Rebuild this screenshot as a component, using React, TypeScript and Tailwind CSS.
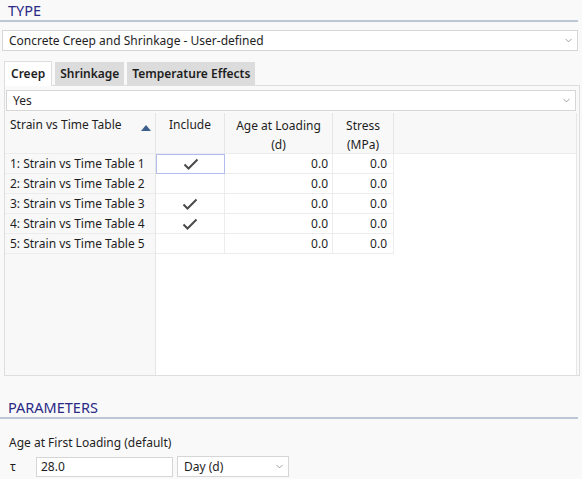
import { ChevronDown } from "lucide-react"

const rows = [
  { name: "1: Strain vs Time Table 1", include: true, age: "0.0", stress: "0.0" },
  { name: "2: Strain vs Time Table 2", include: false, age: "0.0", stress: "0.0" },
  { name: "3: Strain vs Time Table 3", include: true, age: "0.0", stress: "0.0" },
  { name: "4: Strain vs Time Table 4", include: true, age: "0.0", stress: "0.0" },
  { name: "5: Strain vs Time Table 5", include: false, age: "0.0", stress: "0.0" },
]

function Check() {
  return (
    <svg width="16" height="12" viewBox="0 0 16 12" fill="none">
      <path d="M1.5 6.5L5.5 10.5L14.5 1.5" stroke="#4a4a4a" strokeWidth="2" />
    </svg>
  )
}

function Select({ value, className = "" }: { value: string; className?: string }) {
  return (
    <div
      className={`flex h-[21px] items-center justify-between border border-[#d6d6d6] bg-white pl-[6px] pr-[3px] ${className}`}
    >
      <span>{value}</span>
      <ChevronDown size={11} strokeWidth={1.5} className="text-[#777]" />
    </div>
  )
}

function SectionTitle({ children }: { children: string }) {
  return (
    <div className="mr-[4px] border-b-2 border-[#bcc7d6] pb-[1px] pl-[8px] text-[14.5px] leading-[18px] text-[#2a2a86]">
      {children}
    </div>
  )
}

export default function App() {
  return (
    <div
      className="h-[479px] w-[582px] overflow-hidden bg-[#f9f9f9] text-[12px] text-[#1e1e1e]"
      style={{ fontFamily: '"Segoe UI", "Noto Sans", sans-serif' }}
    >
      <div className="pt-[1px]">
        <SectionTitle>TYPE</SectionTitle>
      </div>

      <Select value="Concrete Creep and Shrinkage - User-defined" className="mx-[2px] mt-[8px] mr-[4px]" />

      {/* tabs */}
      <div className="mt-[10px] flex items-end gap-[3px] pl-[4px]">
        <div className="relative z-10 -mb-px flex h-[25px] items-center border border-b-0 border-[#dedede] bg-white px-[6px] font-semibold">
          Creep
        </div>
        <div className="flex h-[23px] items-center bg-[#dcdcdc] px-[5px] font-semibold">Shrinkage</div>
        <div className="flex h-[23px] items-center bg-[#dcdcdc] px-[5px] font-semibold">Temperature Effects</div>
      </div>

      <div className="mx-[4px] mr-[2px] flex h-[291px] flex-col border border-[#dedede] bg-[#f9f9f9] pt-[4px]">
        <Select value="Yes" className="mx-[1px] mr-[3px]" />

        {/* grid */}
        <div className="mt-[2px] mr-[2px] flex flex-1 flex-col border-r border-[#e6e6e6]">
          <div className="flex h-[41px] border-b border-[#ececec] bg-[#f8f8f8]">
            <div className="flex w-[151px] justify-between border-r border-[#e6e6e6] pl-[5px] pr-[4px] pt-[3px]">
              <span>Strain vs Time Table</span>
              <svg width="10" height="6" viewBox="0 0 10 6" className="mt-[9px]">
                <path d="M0 6L5 0L10 6Z" fill="#3c5f8c" />
              </svg>
            </div>
            <div className="w-[69px] border-r border-[#e6e6e6] pt-[3px] text-center">Include</div>
            <div className="w-[108px] border-r border-[#e6e6e6] pt-[3px] text-center leading-[19px]">
              Age at Loading
              <br />
              (d)
            </div>
            <div className="w-[61px] border-r border-[#e6e6e6] pt-[3px] text-center leading-[19px]">
              Stress
              <br />
              (MPa)
            </div>
            <div className="flex-1" />
          </div>

          <div className="flex flex-1">
            <div className="flex w-[151px] flex-col border-r border-[#e6e6e6] bg-[#f8f8f8]">
              {rows.map((r) => (
                <div key={r.name} className="flex h-[20px] items-center border-b border-[#ececec] pl-[5px]">
                  {r.name}
                </div>
              ))}
            </div>
            <div className="flex flex-col bg-white">
              {rows.map((r, i) => (
                <div key={r.name} className="flex h-[20px]">
                  <div
                    className={`flex w-[69px] items-center justify-center border-r ${
                      i === 0 ? "border border-[#b3bdf0]" : "border-b border-[#ececec]"
                    }`}
                  >
                    {r.include && <Check />}
                  </div>
                  <div className="flex w-[108px] items-center justify-end border-b border-r border-[#ececec] pr-[4px]">
                    {r.age}
                  </div>
                  <div className="flex w-[61px] items-center justify-end border-b border-r border-[#ececec] pr-[6px]">
                    {r.stress}
                  </div>
                </div>
              ))}
            </div>
            <div className="flex-1 bg-white" />
          </div>
        </div>
      </div>

      <div className="mt-[22px]">
        <SectionTitle>PARAMETERS</SectionTitle>
      </div>

      <div className="mt-[15px] pl-[9px]">Age at First Loading (default)</div>
      <div className="mt-[4px] flex items-center pl-[10px]">
        <span className="w-[26px]">τ</span>
        <div className="flex h-[20px] w-[137px] items-center border border-[#d6d6d6] bg-white pl-[4px]">28.0</div>
        <Select value="Day (d)" className="ml-[4px] h-[20px] w-[112px]" />
      </div>
    </div>
  )
}
